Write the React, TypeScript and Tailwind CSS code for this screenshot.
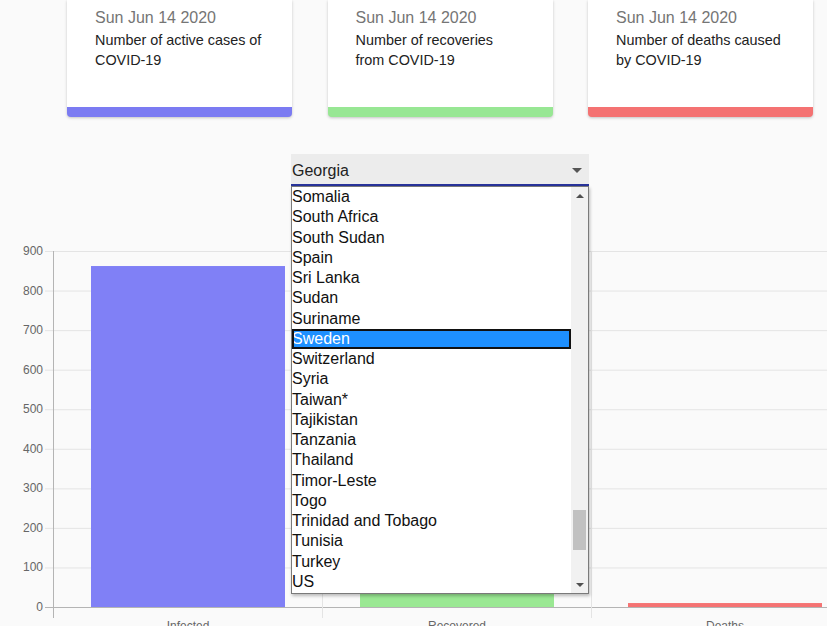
import { useState } from 'react'

const cards = [
  { desc: 'Number of active cases of COVID-19', color: 'border-[#7b7bf2]' },
  { desc: 'Number of recoveries from COVID-19', color: 'border-[#98e794]' },
  { desc: 'Number of deaths caused by COVID-19', color: 'border-[#f47272]' },
]

const countries = [
  'Somalia', 'South Africa', 'South Sudan', 'Spain', 'Sri Lanka', 'Sudan', 'Suriname', 'Sweden',
  'Switzerland', 'Syria', 'Taiwan*', 'Tajikistan', 'Tanzania', 'Thailand', 'Timor-Leste', 'Togo',
  'Trinidad and Tobago', 'Tunisia', 'Turkey', 'US',
]

const bars = [
  { label: 'Infected', value: 862, x: 91, fill: '#8080f6' },
  { label: 'Recovered', value: 720, x: 360, fill: '#9ae893' },
  { label: 'Deaths', value: 10, x: 628, fill: '#f57373' },
]

const Y0 = 421
const yOf = (v: number) => Y0 - (v * 356) / 900

function Chart() {
  const ticks = [0, 100, 200, 300, 400, 500, 600, 700, 800, 900]
  return (
    <svg width={827} height={440} className="block">
      {ticks.map((t) => (
        <g key={t}>
          <line x1={45} x2={827} y1={yOf(t) + 0.5} y2={yOf(t) + 0.5} stroke={t === 0 ? '#b4b4b4' : '#e4e4e4'} />
          <text x={43} y={yOf(t) + 4} textAnchor="end" fontSize={12} fill="#666" fontFamily="Liberation Sans, Arial, sans-serif">
            {t}
          </text>
        </g>
      ))}
      <line x1={322.5} x2={322.5} y1={65} y2={432} stroke="#e4e4e4" />
      <line x1={591.5} x2={591.5} y1={65} y2={432} stroke="#e4e4e4" />
      {bars.map((b) => (
        <rect key={b.label} x={b.x} y={yOf(b.value)} width={194} height={Y0 - yOf(b.value)} fill={b.fill} />
      ))}
      <line x1={53.5} x2={53.5} y1={65} y2={432} stroke="#b4b4b4" />
      {bars.map((b) => (
        <text key={b.label} x={b.x + 97} y={444} textAnchor="middle" fontSize={12} fill="#666" fontFamily="Liberation Sans, Arial, sans-serif">
          {b.label}
        </text>
      ))}
    </svg>
  )
}

export default function App() {
  const [selected] = useState('Sweden')

  return (
    <div className="w-[827px] h-[626px] overflow-hidden bg-[#fafafa] font-['Liberation_Sans',Arial,sans-serif]">
      {/* Cards */}
      <div className="flex gap-[35.5px] pl-[67px]">
        {cards.map((c) => (
          <div
            key={c.desc}
            className={`w-[225px] h-[117px] bg-white rounded-b-[4px] border-b-[10px] ${c.color} shadow-[0_1px_3px_rgba(0,0,0,0.22)] pl-[28px] pt-[6px]`}
          >
            <div className="text-[16px] leading-[24px] text-[#757575]">Sun Jun 14 2020</div>
            <div className="w-[169px] text-[14.4px] leading-[20px] text-[#222]">{c.desc}</div>
          </div>
        ))}
      </div>

      <div className="relative mt-[37px]">
        {/* Select */}
        <div className="ml-[291px] w-[298px] h-[32px] bg-[#ececec] border-b-2 border-[#28339a] flex items-center justify-between pt-[3px] pl-[1px] pr-[7px]">
          <span className="text-[16px] text-[#222]">Georgia</span>
          <span className="w-0 h-0 border-l-[5px] border-r-[5px] border-t-[5px] border-l-transparent border-r-transparent border-t-[#555]" />
        </div>

        <Chart />

        {/* Open listbox */}
        <div className="absolute left-[291px] top-[32px] w-[298px] h-[408px] bg-white border border-[#7a7a7a] shadow-[1px_2px_3px_rgba(0,0,0,0.25)] flex">
          <div className="flex-1 flex flex-col">
            {countries.map((c) => (
              <div
                key={c}
                className={`h-[20.25px] leading-[20.25px] text-[16px] whitespace-nowrap ${
                  c === selected ? 'bg-[#1e90ff] text-white outline-2 outline-[#111] -outline-offset-2' : 'text-[#111]'
                }`}
              >
                {c}
              </div>
            ))}
          </div>
          <div className="w-[17px] bg-[#f1f1f1] flex flex-col items-center">
            <div className="h-[17px] flex items-center justify-center">
              <span className="w-0 h-0 border-l-[4px] border-r-[4px] border-b-[4px] border-l-transparent border-r-transparent border-b-[#505050]" />
            </div>
            <div className="flex-1 w-full px-[2px] pt-[306px]">
              <div className="h-[40px] bg-[#c1c1c1]" />
            </div>
            <div className="h-[17px] flex items-center justify-center">
              <span className="w-0 h-0 border-l-[4px] border-r-[4px] border-t-[4px] border-l-transparent border-r-transparent border-t-[#505050]" />
            </div>
          </div>
        </div>
      </div>
    </div>
  )
}
